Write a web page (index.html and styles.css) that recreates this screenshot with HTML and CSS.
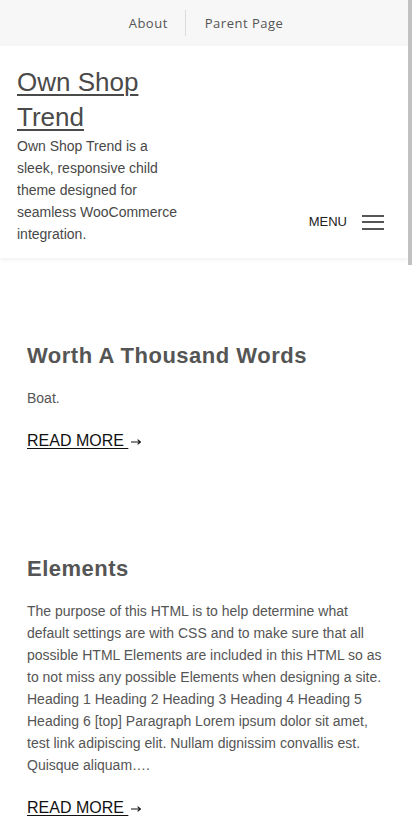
FILE: index.html
```html
<!DOCTYPE html>
<html lang="en">
<head>
<meta charset="utf-8">
<meta name="viewport" content="width=device-width, initial-scale=1">
<title>Own Shop Trend</title>
<link rel="stylesheet" href="styles.css">
</head>
<body>
<div class="page">
  <div class="topbar">
    <ul class="topnav">
      <li><a href="#">About</a></li>
      <li class="sep"><a href="#">Parent Page</a></li>
    </ul>
  </div>
  <header class="header">
    <div class="branding">
      <a class="site-title" href="#">Own Shop Trend</a>
      <p class="site-desc">Own Shop Trend is a sleek, responsive child theme designed for seamless WooCommerce integration.</p>
    </div>
    <button class="menu-toggle" type="button">
      <span class="menu-label">MENU</span>
      <span class="burger"><span></span><span></span><span></span></span>
    </button>
  </header>
  <main class="posts">
    <article class="post">
      <h2 class="post-title">Worth A Thousand Words</h2>
      <p class="post-text">Boat.</p>
      <a class="read-more" href="#"><span class="rm-text">READ MORE </span><svg class="arrow" viewBox="0 0 10 8" width="10" height="8"><path d="M0 4H9.4M6.6 1.6L9.4 4L6.6 6.4" fill="none" stroke="#111" stroke-width="1.1"/></svg></a>
    </article>
    <article class="post">
      <h2 class="post-title">Elements</h2>
      <p class="post-text">The purpose of this HTML is to help determine what default settings are with CSS and to make sure that all possible HTML Elements are included in this HTML so as to not miss any possible Elements when designing a site. Heading 1 Heading 2 Heading 3 Heading 4 Heading 5 Heading 6 [top] Paragraph Lorem ipsum dolor sit amet, test link adipiscing elit. Nullam dignissim convallis est. Quisque aliquam….</p>
      <a class="read-more" href="#"><span class="rm-text">READ MORE </span><svg class="arrow" viewBox="0 0 10 8" width="10" height="8"><path d="M0 4H9.4M6.6 1.6L9.4 4L6.6 6.4" fill="none" stroke="#111" stroke-width="1.1"/></svg></a>
    </article>
  </main>
</div>
<div class="scroll-thumb"></div>
</body>
</html>
```
FILE: styles.css
```css
html, body {
  margin: 0;
  padding: 0;
  background: #ffffff;
  overflow: hidden;
}
body {
  font-family: "Liberation Sans", Arial, sans-serif;
  color: #555555;
}
.page {
  width: 408px;
}
.topbar {
  background: #f7f7f7;
  height: 46px;
  display: flex;
  justify-content: center;
  align-items: center;
  padding-left: 3px;
}
.topnav {
  list-style: none;
  margin: 0;
  padding: 0;
  display: flex;
  align-items: center;
  height: 26px;
}
.topnav li {
  padding: 0 17px 0 18px;
  height: 26px;
  display: flex;
  align-items: center;
}
.topnav li.sep {
  border-left: 1px solid #dcdcdc;
  padding-left: 19px;
}
.topnav a {
  font-family: "Open Sans", sans-serif;
  font-size: 13px;
  letter-spacing: 0.5px;
  color: #555555;
  text-decoration: none;
}
.header {
  background: #ffffff;
  display: flex;
  justify-content: space-between;
  padding: 19px 24px 13px 17px;
  box-shadow: 0 2px 4px rgba(0, 0, 0, 0.06);
  position: relative;
}
.branding {
  width: 166px;
}
.site-title {
  display: block;
  font-size: 26px;
  line-height: 35px;
  color: #4a4a4a;
  text-decoration: underline;
  text-decoration-thickness: 2px;
  text-underline-offset: 3px;
}
.site-desc {
  margin: 0;
  font-size: 14px;
  line-height: 22px;
  color: #484848;
}
.menu-toggle {
  align-self: flex-end;
  margin: 0 0 12px;
  padding: 0;
  border: 0;
  background: transparent;
  display: flex;
  align-items: center;
  gap: 15px;
  height: 22px;
  font-family: "Liberation Sans", Arial, sans-serif;
}
.menu-label {
  font-size: 13px;
  color: #222222;
  line-height: 22px;
}
.burger {
  display: flex;
  flex-direction: column;
  gap: 4.5px;
  width: 22px;
}
.burger span {
  display: block;
  height: 2px;
  background: #555555;
}
.posts {
  padding: 84px 24px 0 27px;
}
.post {
  margin-bottom: 103px;
}
.post-title {
  margin: 0 0 17px;
  font-size: 22px;
  letter-spacing: 0.5px;
  line-height: 28px;
  font-weight: bold;
  color: #555555;
}
.post-text {
  margin: 0 0 21px;
  font-size: 14px;
  line-height: 22px;
  color: #555555;
}
.read-more {
  display: inline-flex;
  align-items: center;
  font-size: 16px;
  line-height: 22px;
  color: #111111;
  text-decoration: none;
}
.rm-text {
  text-decoration: underline;
  text-underline-offset: 2px;
  white-space: pre;
}
.arrow {
  margin-left: 3px;
  margin-top: 1px;
}
.scroll-thumb {
  position: fixed;
  top: 0;
  right: 0;
  width: 4px;
  height: 265px;
  background: #c1c1c1;
}
```
